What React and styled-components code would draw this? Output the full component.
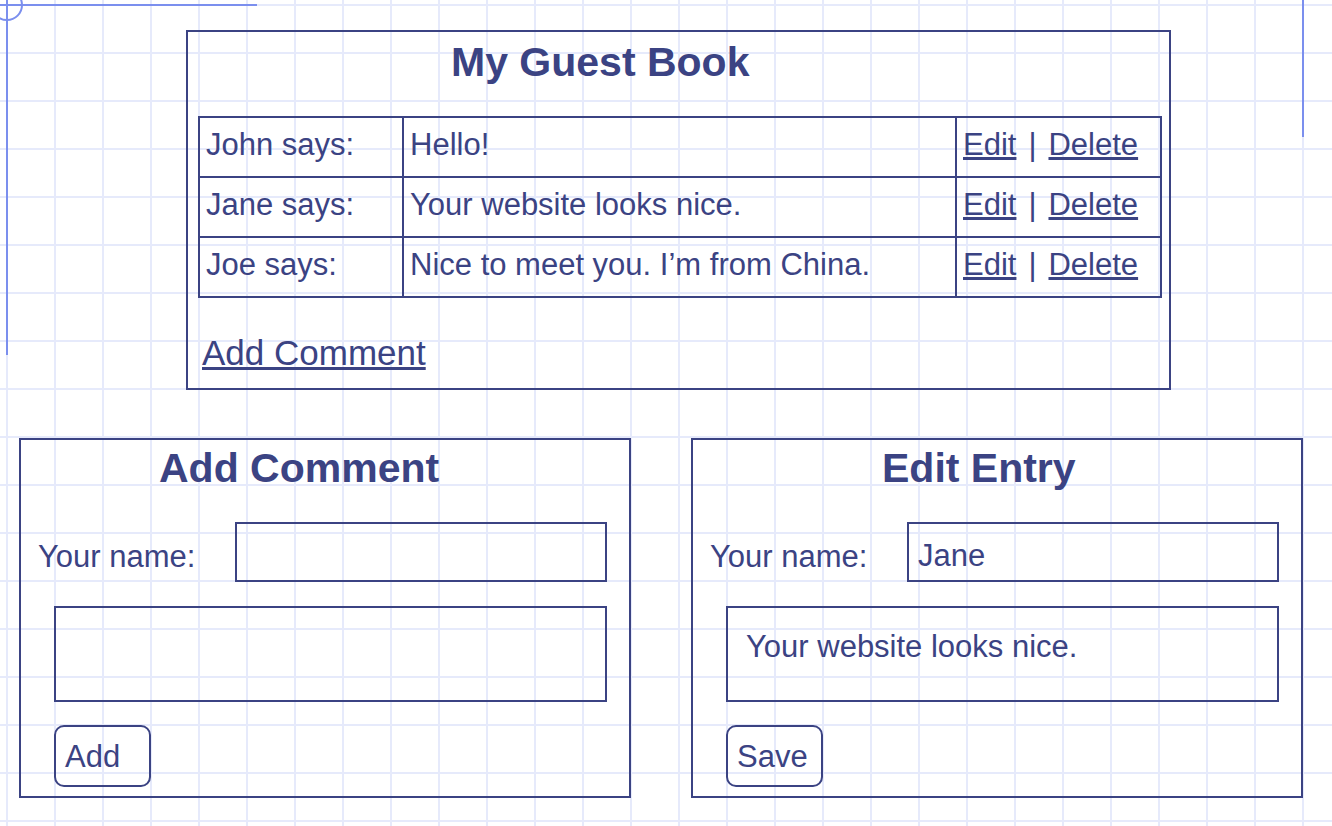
import React from 'react';
import styled, { createGlobalStyle } from 'styled-components';

const ink = '#3b4383';
const guide = '#7b8fee';

const GlobalStyle = createGlobalStyle`
  html, body {
    margin: 0;
  }
  body {
    background-color: #fff;
    background-image:
      linear-gradient(to right, #e6eafb 2px, transparent 2px),
      linear-gradient(to bottom, #e6eafb 2px, transparent 2px);
    background-size: 48px 48px;
    background-position: 6px 4px;
    font-family: "Liberation Sans", Arial, sans-serif;
    color: ${ink};
  }
`;

const Page = styled.div`
  position: relative;
  width: 1332px;
  height: 826px;
  box-sizing: border-box;
  padding-top: 30px;
  overflow: hidden;
`;

const Guides = styled.svg`
  position: absolute;
  top: 0;
  left: 0;
  pointer-events: none;
`;

const GuestBook = styled.section`
  margin-left: 186px;
  width: 985px;
  height: 360px;
  box-sizing: border-box;
  border: 2px solid ${ink};
  padding: 10px 0 0 10px;
`;

const Heading = styled.h1`
  margin: 0;
  padding-left: ${(p) => p.$indent}px;
  font-size: 41px;
  line-height: 41px;
  font-weight: bold;
`;

const Entries = styled.table`
  margin-top: 33px;
  width: 964px;
  table-layout: fixed;
  border-collapse: separate;
  border-spacing: 0;
  border-top: 2px solid ${ink};
  border-left: 2px solid ${ink};
  font-size: 31px;
  line-height: 31px;
`;

const Cell = styled.td`
  padding: 11px 6px 16px;
  border-right: 2px solid ${ink};
  border-bottom: 2px solid ${ink};
  white-space: nowrap;
`;

const TextLink = styled.a`
  color: ${ink};
  text-decoration: underline;
  cursor: pointer;
`;

const Sep = styled.span`
  margin: 0 12px;
`;

const AddRow = styled.div`
  margin-top: 37px;
  padding-left: 4px;
  font-size: 35px;
  line-height: 35px;
`;

const FormsRow = styled.div`
  display: flex;
  gap: 60px;
  margin-top: 48px;
  padding-left: 19px;
`;

const Panel = styled.form`
  width: 612px;
  height: 360px;
  box-sizing: border-box;
  border: 2px solid ${ink};
  padding: 8px 22px 0 17px;
  font-size: 31px;
  line-height: 31px;
`;

const NameRow = styled.div`
  display: flex;
  align-items: center;
  margin-top: 33px;
`;

const Label = styled.label`
  width: 197px;
  flex-shrink: 0;
  padding-top: 8px;
`;

const Input = styled.input`
  flex: 1;
  min-width: 0;
  height: 60px;
  box-sizing: border-box;
  border: 2px solid ${ink};
  padding: 8px 9px 0;
  background: transparent;
  font: inherit;
  color: ${ink};
  outline: none;
`;

const TextArea = styled.textarea`
  display: block;
  margin: 24px 0 0 16px;
  width: calc(100% - 16px);
  height: 96px;
  box-sizing: border-box;
  border: 2px solid ${ink};
  padding: 23px 18px 0;
  background: transparent;
  font: inherit;
  line-height: 31px;
  color: ${ink};
  resize: none;
  outline: none;
`;

const Button = styled.button`
  display: block;
  margin: 23px 0 0 16px;
  width: 97px;
  height: 62px;
  box-sizing: border-box;
  border: 2px solid ${ink};
  border-radius: 10px;
  padding: 0 0 0 9px;
  background: transparent;
  font: inherit;
  line-height: 31px;
  color: ${ink};
  text-align: left;
  cursor: pointer;
`;

const entries = [
  { name: 'John', text: 'Hello!' },
  { name: 'Jane', text: 'Your website looks nice.' },
  { name: 'Joe', text: 'Nice to meet you. I\u2019m from China.' },
];

const CommentForm = ({ title, indent, name, message, action }) => (
  <Panel onSubmit={(e) => e.preventDefault()}>
    <Heading $indent={indent}>{title}</Heading>
    <NameRow>
      <Label>Your name:</Label>
      <Input type="text" defaultValue={name} />
    </NameRow>
    <TextArea defaultValue={message} />
    <Button type="submit">{action}</Button>
  </Panel>
);

const App = () => (
  <>
    <GlobalStyle />
    <Page>
      <Guides width="1332" height="826" viewBox="0 0 1332 826">
        <g stroke={guide} strokeWidth="2" fill="none">
          <line x1="0" y1="5" x2="257" y2="5" />
          <line x1="7" y1="0" x2="7" y2="355" />
          <circle cx="7" cy="5" r="15" />
          <line x1="1303" y1="0" x2="1303" y2="137" />
        </g>
      </Guides>

      <GuestBook>
        <Heading $indent={253}>My Guest Book</Heading>
        <Entries>
          <colgroup>
            <col style={{ width: 204 }} />
            <col style={{ width: 553 }} />
            <col style={{ width: 205 }} />
          </colgroup>
          <tbody>
            {entries.map((entry) => (
              <tr key={entry.name}>
                <Cell>{entry.name} says:</Cell>
                <Cell>{entry.text}</Cell>
                <Cell>
                  <TextLink>Edit</TextLink>
                  <Sep>|</Sep>
                  <TextLink>Delete</TextLink>
                </Cell>
              </tr>
            ))}
          </tbody>
        </Entries>
        <AddRow>
          <TextLink>Add Comment</TextLink>
        </AddRow>
      </GuestBook>

      <FormsRow>
        <CommentForm title="Add Comment" indent={121} name="" message="" action="Add" />
        <CommentForm
          title="Edit Entry"
          indent={172}
          name="Jane"
          message="Your website looks nice."
          action="Save"
        />
      </FormsRow>
    </Page>
  </>
);

export default App;
